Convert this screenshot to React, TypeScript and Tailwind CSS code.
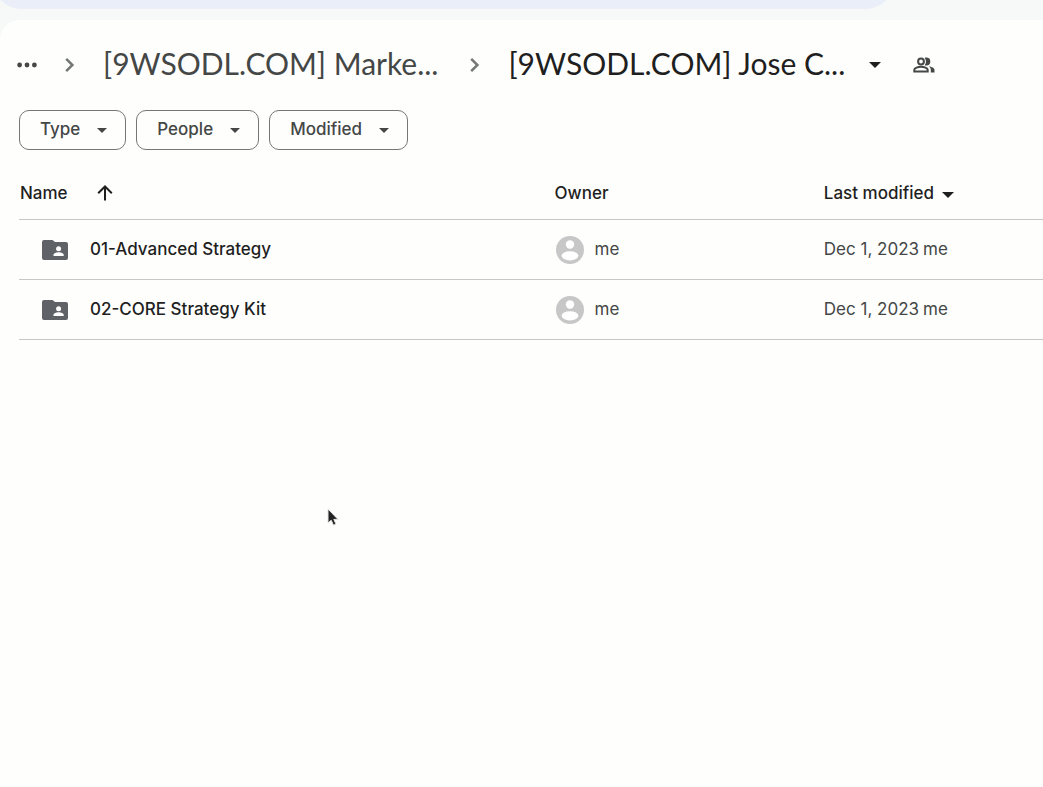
import React from "react";

type Entry = { name: string; owner: string; modified: string; by: string };

const entries: Entry[] = [
  { name: "01-Advanced Strategy", owner: "me", modified: "Dec 1, 2023", by: "me" },
  { name: "02-CORE Strategy Kit", owner: "me", modified: "Dec 1, 2023", by: "me" },
];

const filters = ["Type", "People", "Modified"];

function Caret({ className }: { className: string }) {
  return (
    <svg viewBox="0 0 12 6" className={className} fill="currentColor" aria-hidden="true">
      <path d="M0 0h12L6 6z" />
    </svg>
  );
}

function Chevron() {
  return (
    <svg viewBox="0 0 10 16" className="h-4 w-[10px] shrink-0 text-[#747775]" fill="none" stroke="currentColor" strokeWidth="2.5" aria-hidden="true">
      <path d="M1.2 1.8 7.400 8l-6.200 6.200" />
    </svg>
  );
}

function PeopleIcon() {
  return (
    <svg viewBox="0 0 22 16" className="h-4 w-[22px]" aria-hidden="true">
      <g fill="none" stroke="currentColor" strokeWidth="2">
        <circle cx="8" cy="4.5" r="2.9" />
        <path d="M1.3 14.4v-1.6c0-1.8 3.7-3 6.7-3s6.7 1.2 6.7 3v1.6z" />
      </g>
      <path fill="currentColor" d="M11.6.9C12.1.6 12.7.5 13.3.5a4 4 0 0 1 0 8c-.6 0-1.200-.1-1.700-.3a6 6 0 0 0 0-7.300zM15.800 9.300c2.900.5 5.700 1.800 5.700 3.800v2.300h-3.700v-2.600c0-1.500-.8-2.600-2-3.500z" />
    </svg>
  );
}

function SharedFolder() {
  return (
    <svg viewBox="0 0 26 20" className="h-5 w-[26px] shrink-0 text-[#5f6368]" aria-hidden="true">
      <path fill="currentColor" d="M2 0h8.500L13 2h11a2 2 0 0 1 2 2v14a2 2 0 0 1-2 2H2a2 2 0 0 1-2-2V2a2 2 0 0 1 2-2z" />
      <circle cx="16.600" cy="8.700" r="2.500" fill="#fff" />
      <path fill="#fff" d="M11.500 16v-1.200c0-1.700 3.300-2.600 5.100-2.600s5.100.9 5.100 2.600V16z" />
    </svg>
  );
}

function Avatar() {
  return (
    <svg viewBox="0 0 28 28" className="size-7 shrink-0" aria-hidden="true">
      <circle cx="14" cy="14" r="14" fill="#c7c7c7" />
      <circle cx="14" cy="8.500" r="4.200" fill="#fff" />
      <ellipse cx="14" cy="19.800" rx="8.400" ry="4.600" fill="#fff" />
    </svg>
  );
}

function Pointer() {
  return (
    <svg viewBox="0 0 12 19" className="absolute top-[508px] left-[327px] h-[19px] w-3" aria-hidden="true">
      <path d="M1 1v14l3.200-2.800 2.300 5 2.500-1.100-2.200-4.700H11z" fill="#222" stroke="#e6e6e6" strokeWidth="1" />
    </svg>
  );
}

export default function App() {
  return (
    <div className="relative min-h-screen overflow-hidden bg-[#f7f9f8] font-['Inter','Liberation_Sans',sans-serif] text-[#1f1f1f]">
      <header className="flex h-5 flex-col justify-end overflow-hidden pb-[11px]">
        <div className="-ml-2 h-[60px] w-[86.6%] shrink-0 rounded-full bg-[#e9eef8]" />
      </header>

      <main className="min-h-[calc(100vh-20px)] rounded-tl-[20px] bg-[#fefefd]">
        <nav aria-label="Breadcrumb" className="flex h-[90px] items-center pl-[17px] font-['Lato','Liberation_Sans',sans-serif] text-[30px]">
          <button aria-label="Show path" className="text-[#444746]">
            <svg viewBox="0 0 20 6" className="h-[6px] w-5" fill="currentColor" aria-hidden="true">
              <circle cx="2.600" cy="3" r="2.400" />
              <circle cx="10" cy="3" r="2.400" />
              <circle cx="17.400" cy="3" r="2.400" />
            </svg>
          </button>
          <span className="ml-7 flex"><Chevron /></span>
          <a href="#parent" className="ml-7 pb-1 whitespace-nowrap text-[#444746]">[9WSODL.COM] Marke...</a>
          <span className="ml-8 flex"><Chevron /></span>
          <button className="ml-7 flex items-center gap-6 whitespace-nowrap">
            <span className="pb-1">[9WSODL.COM] Jose C...</span>
            <Caret className="h-[6px] w-3" />
          </button>
          <button aria-label="Manage access" className="ml-8 text-[#444746]">
            <PeopleIcon />
          </button>
        </nav>

        <div className="flex gap-[10px] pl-[19px]">
          {filters.map((label) => (
            <button key={label} className="flex h-10 items-center gap-[17px] rounded-[10px] border border-[#747775] pr-[18px] pl-5 text-[17px] font-medium text-[#444746]">
              {label}
              <Caret className="mt-px h-[5px] w-[10px]" />
            </button>
          ))}
        </div>

        <div className="pl-[19px]">
          <table className="mt-4 w-full table-fixed border-collapse text-left text-[17px]">
            <thead>
              <tr className="h-[53px] border-b border-[#c7c7c7]">
                <th scope="col" className="w-[52.3%] pt-[2px] pl-px font-medium">
                  <button className="flex items-center gap-[29px]">
                    Name
                    <svg viewBox="0 0 16 16" className="size-4" fill="none" stroke="currentColor" strokeWidth="2" aria-hidden="true">
                      <path d="M8 15.500V1.700M1.200 8.200 8 1.500l6.800 6.700" />
                    </svg>
                  </button>
                </th>
                <th scope="col" className="w-[26.3%] pt-[2px] font-medium">Owner</th>
                <th scope="col" className="pt-[2px] font-medium">
                  <button className="flex items-center gap-2">
                    Last modified
                    <Caret className="mt-[3px] h-[6px] w-3" />
                  </button>
                </th>
              </tr>
            </thead>
            <tbody>
              {entries.map((e) => (
                <tr key={e.name} className="h-[60px] border-b border-[#c7c7c7]">
                  <td className="pt-[2px] pl-[23px] font-medium">
                    <div className="flex items-center gap-[22px]">
                      <SharedFolder />
                      {e.name}
                    </div>
                  </td>
                  <td className="pt-[2px] pl-px text-[#444746]">
                    <div className="flex items-center gap-[11px]">
                      <Avatar />
                      {e.owner}
                    </div>
                  </td>
                  <td className="pt-[2px] text-[#444746]">
                    <span className="flex gap-1">
                      <span>{e.modified}</span>
                      <span>{e.by}</span>
                    </span>
                  </td>
                </tr>
              ))}
            </tbody>
          </table>
        </div>
      </main>
      <Pointer />
    </div>
  );
}
